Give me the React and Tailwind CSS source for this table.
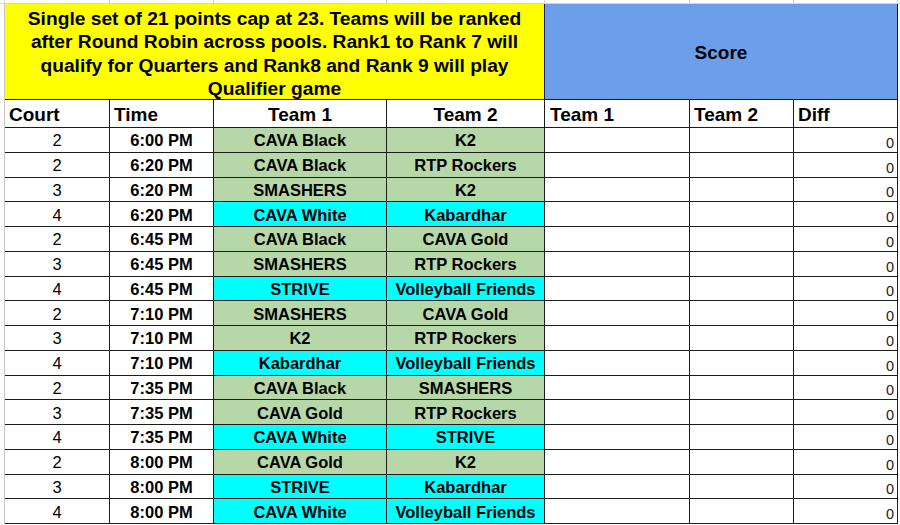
import React from "react";

const rows = [
  ["2", "6:00 PM", "CAVA Black", "K2", "g"],
  ["2", "6:20 PM", "CAVA Black", "RTP Rockers", "g"],
  ["3", "6:20 PM", "SMASHERS", "K2", "g"],
  ["4", "6:20 PM", "CAVA White", "Kabardhar", "c"],
  ["2", "6:45 PM", "CAVA Black", "CAVA Gold", "g"],
  ["3", "6:45 PM", "SMASHERS", "RTP Rockers", "g"],
  ["4", "6:45 PM", "STRIVE", "Volleyball Friends", "c"],
  ["2", "7:10 PM", "SMASHERS", "CAVA Gold", "g"],
  ["3", "7:10 PM", "K2", "RTP Rockers", "g"],
  ["4", "7:10 PM", "Kabardhar", "Volleyball Friends", "c"],
  ["2", "7:35 PM", "CAVA Black", "SMASHERS", "g"],
  ["3", "7:35 PM", "CAVA Gold", "RTP Rockers", "g"],
  ["4", "7:35 PM", "CAVA White", "STRIVE", "c"],
  ["2", "8:00 PM", "CAVA Gold", "K2", "g"],
  ["3", "8:00 PM", "STRIVE", "Kabardhar", "c"],
  ["4", "8:00 PM", "CAVA White", "Volleyball Friends", "c"],
];

const cols = "grid grid-cols-[105px_104px_173px_158px_145px_104px_104px]";
const cell = "border-r border-b border-[#1c1c1c] flex";
const head = `${cell} h-[28px] items-center pt-[3px] font-bold text-[19px] leading-[22px]`;
const body = `${cell} h-[24.75px] items-center justify-center pt-[1px] text-[16.5px] leading-[18px]`;

export default function App() {
  return (
    <div className="w-[900px] h-[525px] bg-white overflow-hidden text-black font-['Liberation_Sans',Arial,sans-serif]">
      <div className="flex h-[4px] border-b border-[#d4d4d4]">
        <div className="w-[5px] border-r border-[#d4d4d4]" />
        <div className={cols}>
          {[0, 1, 2, 3, 4, 5, 6].map((i) => (
            <div key={i} className="border-r border-[#d4d4d4]" />
          ))}
        </div>
      </div>
      <div className="flex">
        <div className="w-[5px] border-r border-[#c8c8c8] shrink-0" />
        <div className={cols}>
          <div className="col-span-4 h-[96px] bg-[#ffff00] border-b border-r border-[#1c1c1c] flex items-start justify-center text-center font-bold text-[19.2px] leading-[23.3px] pt-[3px]">
            <div>
              Single set of 21 points cap at 23. Teams will be ranked
              <br />
              after Round Robin across pools. Rank1 to Rank 7 will
              <br />
              qualify for Quarters and Rank8 and Rank 9 will play
              <br />
              Qualifier game
            </div>
          </div>
          <div className="col-span-3 h-[96px] bg-[#6d9eeb] border-b border-r border-[#1c1c1c] flex items-center justify-center pt-[3px] font-bold text-[19px] leading-[22px]">
            Score
          </div>

          <div className={`${head} pl-[4px]`}>Court</div>
          <div className={`${head} pl-[4px]`}>Time</div>
          <div className={`${head} justify-center`}>Team 1</div>
          <div className={`${head} justify-center`}>Team 2</div>
          <div className={`${head} pl-[5px]`}>Team 1</div>
          <div className={`${head} pl-[4px]`}>Team 2</div>
          <div className={`${head} pl-[4px]`}>Diff</div>

          {rows.map((r, i) => {
            const bg = r[4] === "g" ? "bg-[#b6d7a8]" : "bg-[#00ffff]";
            return (
              <React.Fragment key={i}>
                <div className={body}>{r[0]}</div>
                <div className={`${body} font-bold`}>{r[1]}</div>
                <div className={`${body} font-bold ${bg}`}>{r[2]}</div>
                <div className={`${body} font-bold ${bg}`}>{r[3]}</div>
                <div className={`${cell} h-[24.75px]`} />
                <div className={`${cell} h-[24.75px]`} />
                <div className={`${cell} h-[24.75px] items-end justify-end pr-[3px] pb-[2px] text-[14.5px] leading-[14px] text-[#222]`}>
                  0
                </div>
              </React.Fragment>
            );
          })}
        </div>
      </div>
    </div>
  );
}
